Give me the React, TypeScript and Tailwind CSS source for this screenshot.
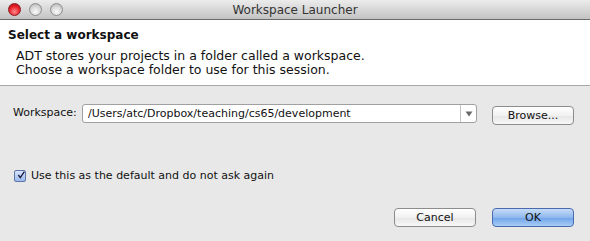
import React, { useState } from 'react';

const font = { fontFamily: '"DejaVu Sans", "Liberation Sans", sans-serif' };

function TrafficLight({ color }: { color: 'red' | 'grey' }) {
  const bg =
    color === 'red'
      ? 'bg-[radial-gradient(circle_at_50%_70%,#ff8c8c_0%,#e8202a_55%,#a80d14_100%)] border-[#8c1a1f]'
      : 'bg-[radial-gradient(circle_at_50%_70%,#fafafa_0%,#d6d6d6_55%,#a9a9a9_100%)] border-[#8e8e8e]';
  return <div className={`w-[13px] h-[13px] rounded-full border ${bg}`} />;
}

function MacButton({ label, primary }: { label: string; primary?: boolean }) {
  return (
    <button
      className={`w-[82px] h-[19px] rounded-[4px] border text-[11px] leading-none text-[#111] ${
        primary
          ? 'border-[#4a6ab0] bg-[linear-gradient(#c7dcf7,#8fb8ee_50%,#6fa2e8_51%,#a8cdf6)]'
          : 'border-[#8c8c8c] bg-[linear-gradient(#ffffff,#f1f1f1_50%,#e6e6e6_51%,#f7f7f7)]'
      }`}
    >
      {label}
    </button>
  );
}

export default function App() {
  const [checked, setChecked] = useState(true);

  return (
    <div className="w-[590px] h-[241px] flex flex-col bg-[#e8e8e8] overflow-hidden" style={font}>
      {/* title bar */}
      <div className="relative h-[20px] shrink-0 flex items-center border-b border-[#6b6b6b] bg-[linear-gradient(#ececec,#c3c3c3)]">
        <div className="flex gap-[8px] pl-[8px]">
          <TrafficLight color="red" />
          <TrafficLight color="grey" />
          <TrafficLight color="grey" />
        </div>
        <div className="absolute inset-0 flex items-center justify-center text-[12px] text-[#333]">
          Workspace Launcher
        </div>
      </div>

      {/* header */}
      <div className="h-[66px] shrink-0 bg-white border-b border-[#a7a7a7] pt-[6px]">
        <div className="pl-[8px] text-[12px] font-bold text-[#111]">Select a workspace</div>
        <div className="pl-[16px] pt-[5px] text-[12.5px] leading-[14px] text-[#111]">
          <div>ADT stores your projects in a folder called a workspace.</div>
          <div>Choose a workspace folder to use for this session.</div>
        </div>
      </div>

      {/* body */}
      <div className="flex-1 flex flex-col pl-[13px] pr-[16px]">
        <div className="flex items-center mt-[18px] h-[19px]">
          <span className="shrink-0 text-[11px] text-[#111] w-[69px]">Workspace:</span>
          <div className="flex w-[397px] h-[19px] border border-[#a0a0a0] rounded-[3px] bg-white">
            <div className="flex-1 pl-[5px] text-[11px] leading-[17px] text-[#111]">
              /Users/atc/Dropbox/teaching/cs65/development
            </div>
            <div className="w-[16px] border-l border-[#c4c4c4] flex items-center justify-center">
              <svg width="8" height="6" viewBox="0 0 8 6">
                <path d="M0.5 0.5 L7.5 0.5 L4 5.5 Z" fill="#6a6a6a" />
              </svg>
            </div>
          </div>
          <div className="ml-[15px]">
            <MacButton label="Browse..." />
          </div>
        </div>

        <label className="flex items-center mt-[45px] gap-[5px] text-[11px] text-[#111]">
          <span
            onClick={() => setChecked(!checked)}
            className="w-[12px] h-[12px] ml-[1px] rounded-[2px] border border-[#5f76a8] bg-[linear-gradient(#d9e6fb,#9ab9ec)] flex items-center justify-center"
          >
            {checked && (
              <svg width="12" height="12" viewBox="0 0 12 12" className="-mt-[3px] ml-[2px]">
                <path d="M2 6 L5 10 L11 1" fill="none" stroke="#1b1b3a" strokeWidth="2" />
              </svg>
            )}
          </span>
          Use this as the default and do not ask again
        </label>

        <div className="flex justify-end gap-[16px] mt-[23px]">
          <MacButton label="Cancel" />
          <MacButton label="OK" primary />
        </div>
      </div>
    </div>
  );
}
